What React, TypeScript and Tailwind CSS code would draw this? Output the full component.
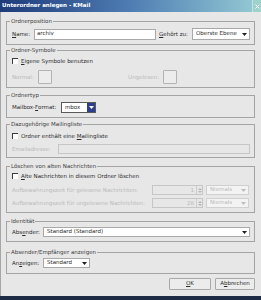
import React from 'react';

const DISABLED = 'text-[#bababa]';

function Arrow({ color = '#222' }: { color?: string }) {
  return (
    <svg width="5" height="3" viewBox="0 0 5 3" className="shrink-0">
      <path d="M0 0H5L2.5 3Z" fill={color} />
    </svg>
  );
}

function Group({ title, className = '', children }: { title: string; className?: string; children: React.ReactNode }) {
  return (
    <fieldset className={`border border-[#a4a4a4] ${className}`}>
      <legend className="ml-[3px] px-[1px] leading-[8px] text-[#3c3c3c]">{title}</legend>
      <div className="pl-[5px] pr-[3px]">{children}</div>
    </fieldset>
  );
}

function Checkbox() {
  return <span className="w-[6px] h-[6px] shrink-0 bg-white border-t border-l border-[#3c3c3c]" />;
}

function Select({ value, className }: { value: string; className: string }) {
  return (
    <div className={`bg-white border border-[#a9a9a9] flex items-center pl-[3px] pr-[2px] ${className}`}>
      <span className="flex-1 truncate leading-none">{value}</span>
      <Arrow />
    </div>
  );
}

function SpinBox({ value }: { value: string }) {
  return (
    <div className="w-[51px] h-[10px] border border-[#c6c6c6] flex">
      <span className={`flex-1 text-right pr-[2px] leading-[8px] ${DISABLED}`}>{value}</span>
      <div className="w-[6px] border-l border-[#cdcdcd] flex flex-col items-center justify-center gap-[1px]">
        <svg width="4" height="2" viewBox="0 0 4 2"><path d="M0 2H4L2 0Z" fill="#b5b5b5" /></svg>
        <svg width="4" height="2" viewBox="0 0 4 2"><path d="M0 0H4L2 2Z" fill="#b5b5b5" /></svg>
      </div>
    </div>
  );
}

function IconButton() {
  return <div className="w-[14px] h-[14px] shrink-0 bg-[#ececec] border border-[#b3b3b3] rounded-[1px]" />;
}

export default function App() {
  return (
    <div className="w-[261px] h-[300px] bg-[#e7e7e7] flex flex-col overflow-hidden text-[5.5px] text-[#2a2a2a] font-['DejaVu_Sans',sans-serif]">
      {/* Title bar */}
      <div className="h-[12px] shrink-0 flex items-center bg-linear-to-r from-[#1f3a7a] via-[#4f7db3] to-[#97ccd4]">
        <span className="flex-1 pl-[2px] text-white font-bold leading-none">Unterordner anlegen - KMail</span>
        <div className="w-[9px] h-[12px] bg-[#9fd1cb] border-l border-[#c3e5e0] flex items-center justify-center">
          <svg width="5" height="5" viewBox="0 0 5 5">
            <path d="M0.5 0.5L4.5 4.5M4.5 0.5L0.5 4.5" stroke="#fff" strokeWidth="1" />
          </svg>
        </div>
      </div>

      <div className="flex-1 flex flex-col border-l border-[#a6a6a6] pl-[5px] pr-[6px]">
        <Group title="Ordnerposition" className="mt-[5px]">
          <div className="pt-[3px] pb-[4px] flex items-center">
            <span className="w-[22px]"><span className="underline">N</span>ame:</span>
            <div className="w-[122px] h-[11px] bg-white border border-[#a9a9a9] flex items-center pl-[2px]">
              <span className="leading-none">archiv</span>
            </div>
            <span className="ml-[3px] w-[33px]"><span className="underline">G</span>ehört zu:</span>
            <Select value="Oberste Ebene" className="w-[58px] h-[12px]" />
          </div>
        </Group>

        <Group title="Ordner-Symbole" className="mt-[1px]">
          <div className="pt-[3px] pb-[3px] flex flex-col">
            <div className="h-[8px] flex items-center gap-[3px]">
              <Checkbox />
              <span><span className="underline">E</span>igene Symbole benutzen</span>
            </div>
            <div className="mt-[5px] flex items-center">
              <span className={`w-[26px] ${DISABLED}`}>Normal:</span>
              <IconButton />
              <span className={`w-[111px] text-right pr-[4px] ${DISABLED}`}>Ungelesen:</span>
              <IconButton />
            </div>
          </div>
        </Group>

        <Group title="Ordnertyp" className="mt-[3px]">
          <div className="pt-[3px] pb-[4px] flex items-center">
            <span className="w-[49px]">Mailbox-<span className="underline">F</span>ormat:</span>
            <div className="w-[35px] h-[11px] bg-white border border-[#5a5a5a] flex">
              <span className="flex-1 pl-[3px] leading-[9px]">mbox</span>
              <div className="w-[8px] bg-[#2b3f8e] flex items-center justify-center">
                <Arrow color="#fff" />
              </div>
            </div>
          </div>
        </Group>

        <Group title="Dazugehörige Mailingliste" className="mt-[2px]">
          <div className="pt-[4px] pb-[3px] flex flex-col">
            <div className="h-[8px] flex items-center gap-[3px]">
              <Checkbox />
              <span>Ordner enthält eine <span className="underline">M</span>ailingliste</span>
            </div>
            <div className="mt-[4px] flex items-center">
              <span className={`w-[46px] ${DISABLED}`}>Emailadresse:</span>
              <div className="w-[192px] h-[10px] border border-[#c6c6c6]" />
            </div>
          </div>
        </Group>

        <Group title="Löschen von alten Nachrichten" className="mt-[4px]">
          <div className="pt-[2px] pb-[4px] flex flex-col">
            <div className="h-[8px] flex items-center gap-[3px]">
              <Checkbox />
              <span><span className="underline">A</span>lte Nachrichten in diesem Ordner löschen</span>
            </div>
            <div className="mt-[5px] flex items-center">
              <span className={`w-[140px] ${DISABLED}`}>Aufbewahrungszeit für gelesene Nachrichten:</span>
              <SpinBox value="1" />
              <div className="ml-[3px] w-[43px] h-[10px] bg-[#f3f3f3] border border-[#d0d0d0] flex items-center pl-[3px] pr-[2px]">
                <span className={`flex-1 leading-none ${DISABLED}`}>Niemals</span>
                <Arrow color="#bdbdbd" />
              </div>
            </div>
            <div className="mt-[3px] flex items-center">
              <span className={`w-[140px] ${DISABLED}`}>Aufbewahrungszeit für ungelesene Nachrichten:</span>
              <SpinBox value="28" />
              <div className="ml-[3px] w-[43px] h-[10px] bg-[#f3f3f3] border border-[#d0d0d0] flex items-center pl-[3px] pr-[2px]">
                <span className={`flex-1 leading-none ${DISABLED}`}>Niemals</span>
                <Arrow color="#bdbdbd" />
              </div>
            </div>
          </div>
        </Group>

        <Group title="Identität" className="mt-[4px]">
          <div className="pt-[2px] pb-[4px] flex items-center">
            <span className="w-[31px]">Abs<span className="underline">e</span>nder:</span>
            <Select value="Standard (Standard)" className="w-[207px] h-[10px]" />
          </div>
        </Group>

        <Group title="Absender/Empfänger anzeigen" className="mt-[6px]">
          <div className="pt-[2px] pb-[5px] flex items-center">
            <span className="w-[31px]">An<span className="underline">z</span>eigen:</span>
            <Select value="Standard" className="w-[47px] h-[10px]" />
          </div>
        </Group>

        <div className="mt-[4px] flex justify-end gap-[4px]">
          <button className="w-[42px] h-[12px] bg-[#ececec] border border-[#a9a9a9] rounded-[1px] leading-none">
            <span className="underline">O</span>K
          </button>
          <button className="w-[40px] h-[12px] bg-[#ececec] border border-[#a9a9a9] rounded-[1px] leading-none">
            A<span className="underline">b</span>brechen
          </button>
        </div>
      </div>

      <div className="h-[4px] shrink-0 bg-[#1d2b45]" />
    </div>
  );
}
